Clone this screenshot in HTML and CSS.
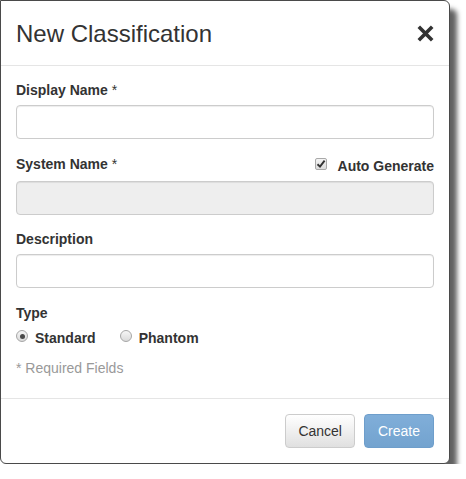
FILE: index.html
```html
<!DOCTYPE html>
<html>
<head>
<meta charset="utf-8">
<link rel="stylesheet" href="styles.css">
</head>
<body>
<div class="modal">
  <div class="modal-header">
    <h4 class="modal-title">New Classification</h4>
    <span class="close">
      <svg width="17" height="17" viewBox="0 0 17 17"><path d="M1.8 1.8 L15.2 15.2 M15.2 1.8 L1.8 15.2" stroke="#333" stroke-width="3.6" fill="none"/></svg>
    </span>
  </div>
  <div class="modal-body">
    <div class="form-group">
      <div class="label">Display Name <span class="req">*</span></div>
      <div class="form-control"></div>
    </div>
    <div class="form-group tight">
      <div class="label-row">
        <div class="label">System Name <span class="req">*</span></div>
        <div class="check">
          <span class="checkbox"><svg width="10" height="10" viewBox="0 0 10 10"><path d="M1.5 5.2 L4 7.6 L8.6 1.6" stroke="#333" stroke-width="1.9" fill="none"/></svg></span>
          <span class="check-text">Auto Generate</span>
        </div>
      </div>
      <div class="form-control disabled"></div>
    </div>
    <div class="form-group">
      <div class="label">Description</div>
      <div class="form-control"></div>
    </div>
    <div class="form-group type">
      <div class="label">Type</div>
      <div class="radios">
        <div class="radio"><span class="radio-dot checked"></span><span class="radio-text">Standard</span></div>
        <div class="radio"><span class="radio-dot"></span><span class="radio-text">Phantom</span></div>
      </div>
    </div>
    <p class="help">* Required Fields</p>
  </div>
  <div class="modal-footer">
    <span class="btn btn-default">Cancel</span>
    <span class="btn btn-primary">Create</span>
  </div>
</div>
</body>
</html>
```

FILE: styles.css
```css
* { box-sizing: border-box; }
html, body { margin: 0; padding: 0; background: #fff; }
body {
  font-family: "Liberation Sans", Arial, sans-serif;
  font-size: 14px;
  line-height: 20px;
  color: #333;
}
.modal {
  width: 450px;
  height: 464px;
  border: 1px solid #4a4a4a;
  border-radius: 0 6px 6px 6px;
  background: #fff;
  box-shadow: 7px 9px 5px rgba(0, 0, 0, 0.62);
  display: flex;
  flex-direction: column;
}
.modal-header {
  height: 65px;
  padding: 0 15px;
  border-bottom: 1px solid #e5e5e5;
  display: flex;
  align-items: center;
  justify-content: space-between;
}
.modal-title {
  margin: 0;
  font-size: 24px;
  font-weight: normal;
  line-height: 34px;
  color: #333;
  padding-top: 1px;
}
.close { display: flex; width: 17px; height: 17px; margin-top: 1px; }
.modal-body {
  padding: 14px 15px 15px;
  flex: 1;
}
.form-group { margin-bottom: 15px; }
.form-group.tight { margin-bottom: 14px; }
.label { font-weight: bold; line-height: 20px; margin-bottom: 5px; }
.req { font-weight: normal; }
.label-row {
  display: flex;
  justify-content: space-between;
  align-items: flex-start;
  height: 22px;
  margin-bottom: 5px;
}
.label-row .label { margin-bottom: 0; }
.check {
  display: flex;
  align-items: flex-start;
  padding-top: 2px;
  font-weight: bold;
}
.checkbox {
  width: 12px;
  height: 12px;
  margin-top: 2px;
  margin-right: 11px;
  border: 1px solid #a9a9a9;
  border-radius: 2px;
  background: linear-gradient(#f4f4f4, #dcdcdc);
  display: flex;
  align-items: center;
  justify-content: center;
}
.form-control {
  height: 34px;
  border: 1px solid #ccc;
  border-radius: 4px;
  background: #fff;
  box-shadow: inset 0 1px 1px rgba(0, 0, 0, 0.075);
}
.form-control.disabled { background: #eee; }
.form-group.type { margin-bottom: 10px; }
.radios { display: flex; gap: 24px; font-weight: bold; }
.radio { display: flex; align-items: flex-start; }
.radio-dot {
  width: 12px;
  height: 12px;
  margin-top: 2px;
  margin-right: 7px;
  border: 1px solid #a6a6a6;
  border-radius: 50%;
  background: linear-gradient(#f6f6f6, #dadada);
  display: flex;
  align-items: center;
  justify-content: center;
}
.radio-dot.checked::after {
  content: "";
  width: 5px;
  height: 5px;
  border-radius: 50%;
  background: #4a4a4a;
}
.help { margin: 0; color: #999; }
.modal-footer {
  padding: 15px;
  border-top: 1px solid #e5e5e5;
  display: flex;
  justify-content: flex-end;
  gap: 9px;
}
.btn {
  display: inline-block;
  height: 34px;
  padding: 6px 12px;
  border-radius: 4px;
  border: 1px solid #ccc;
  line-height: 20px;
  font-size: 14px;
}
.btn-default {
  background: linear-gradient(#fff, #e0e0e0);
  color: #333;
  border-color: #ccc;
}
.btn-primary {
  background: linear-gradient(#80aed9, #73a3cf);
  color: #fff;
  border-color: #6e9ecb;
  padding: 6px 13px;
}
```
